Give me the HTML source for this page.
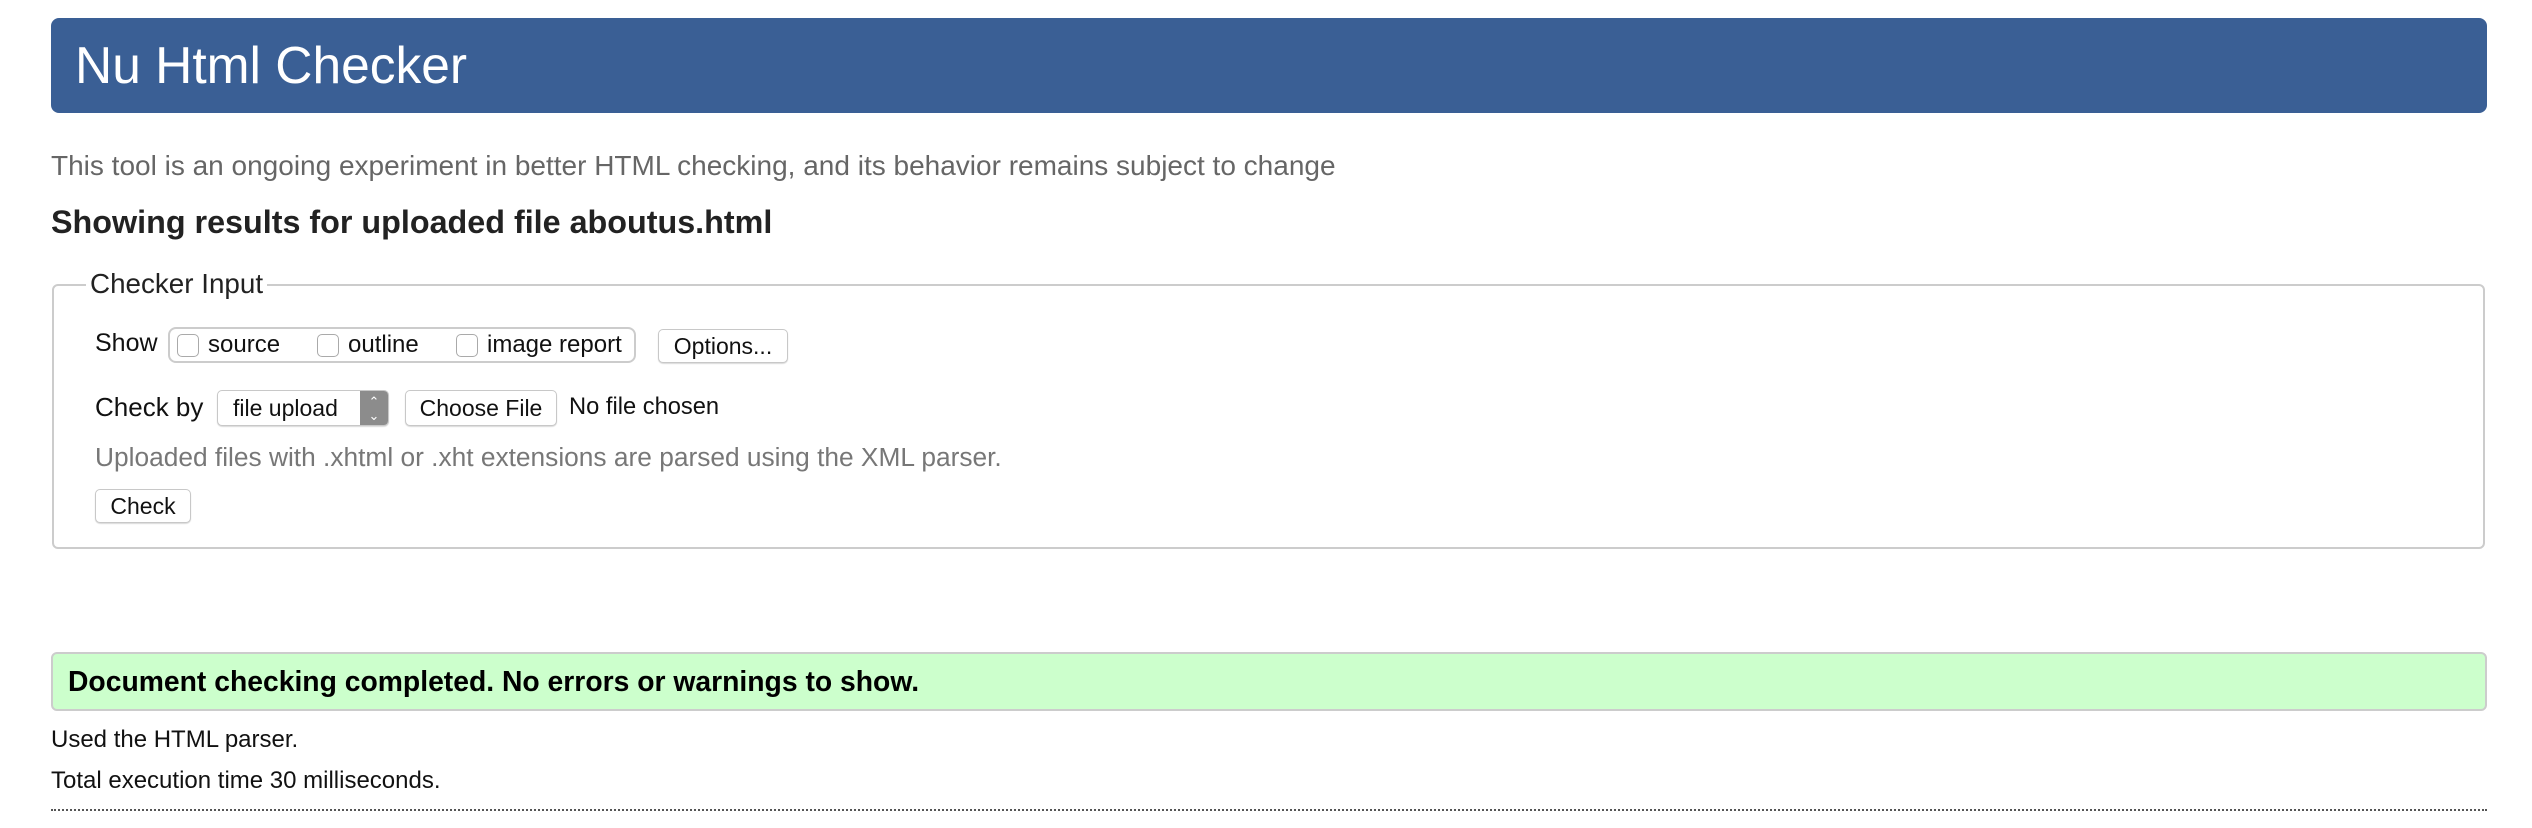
<!DOCTYPE html>
<html><head><style>
body{margin:0;width:2532px;height:828px;background:#fff;font-family:"Liberation Sans",Arial,sans-serif;position:relative;overflow:hidden;color:#111}
.a{position:absolute;white-space:nowrap}
.hdr{left:51px;top:18px;width:2436px;height:95px;background:#3a5f95;border-radius:8px;}
.hdr span{position:absolute;left:24px;top:17px;font-size:51.5px;color:#fff}
.btn{position:absolute;border:1px solid #c8c8c8;border-radius:5px;background:#fff;box-shadow:0 1px 1px rgba(0,0,0,.15);font-size:22px;color:#111;text-align:center;box-sizing:border-box}
.cb{position:absolute;width:22px;height:23px;border:1px solid #aaa;border-radius:5px;background:#fff;box-sizing:border-box}
</style></head><body>
<div class="a hdr"><span>Nu Html Checker</span></div>
<div class="a" style="left:51px;top:150px;font-size:28px;color:#666">This tool is an ongoing experiment in better HTML checking, and its behavior remains subject to change</div>
<div class="a" style="left:51px;top:204px;font-size:32.3px;font-weight:bold;color:#222">Showing results for uploaded file aboutus.html</div>
<div class="a" style="left:52px;top:284px;width:2433px;height:265px;border:2px solid #ccc;border-radius:6px;box-sizing:border-box"></div>
<div class="a" style="left:86px;top:268px;padding:0 4px;background:#fff;font-size:27.8px;color:#222">Checker Input</div>
<div class="a" style="left:95px;top:329px;font-size:25px">Show</div>
<div class="a" style="left:168px;top:327px;width:468px;height:36px;border:2px solid #ccc;border-radius:8px;box-sizing:border-box"></div>
<div class="cb" style="left:177px;top:334px"></div><div class="a" style="left:208px;top:331px;font-size:24px">source</div>
<div class="cb" style="left:317px;top:334px"></div><div class="a" style="left:348px;top:331px;font-size:24px">outline</div>
<div class="cb" style="left:456px;top:334px"></div><div class="a" style="left:487px;top:331px;font-size:24px">image report</div>
<div class="btn" style="left:658px;top:329px;width:130px;height:34px;line-height:32px;font-size:23px">Options...</div>
<div class="a" style="left:95px;top:392px;font-size:26px">Check by</div>
<div class="btn" style="left:217px;top:390px;width:172px;height:36px;line-height:34px;text-align:left;padding-left:15px;overflow:hidden;font-size:23px">file upload<div style="position:absolute;right:0;top:0;width:28px;height:36px;background:#8c8c8c;color:#fff;font-size:13px;line-height:14px;text-align:center;padding-top:4px;box-sizing:border-box">&#8963;<br>&#8964;</div></div>
<div class="btn" style="left:405px;top:390px;width:152px;height:36px;line-height:34px;font-size:23px">Choose File</div>
<div class="a" style="left:569px;top:394px;font-size:23.7px">No file chosen</div>
<div class="a" style="left:95px;top:442px;font-size:26.3px;color:#777">Uploaded files with .xhtml or .xht extensions are parsed using the XML parser.</div>
<div class="btn" style="left:95px;top:489px;width:96px;height:34px;line-height:32px;font-size:23px">Check</div>
<div class="a" style="left:51px;top:652px;width:2436px;height:59px;background:#ccffcc;border:2px solid #ccc;border-radius:6px;box-sizing:border-box"></div>
<div class="a" style="left:68px;top:665px;font-size:28.3px;font-weight:bold;color:#000">Document checking completed. No errors or warnings to show.</div>
<div class="a" style="left:51px;top:726px;font-size:24px">Used the HTML parser.</div>
<div class="a" style="left:51px;top:767px;font-size:24px">Total execution time 30 milliseconds.</div>
<div class="a" style="left:51px;top:809px;width:2436px;border-top:2px dotted #555"></div>
</body></html>
